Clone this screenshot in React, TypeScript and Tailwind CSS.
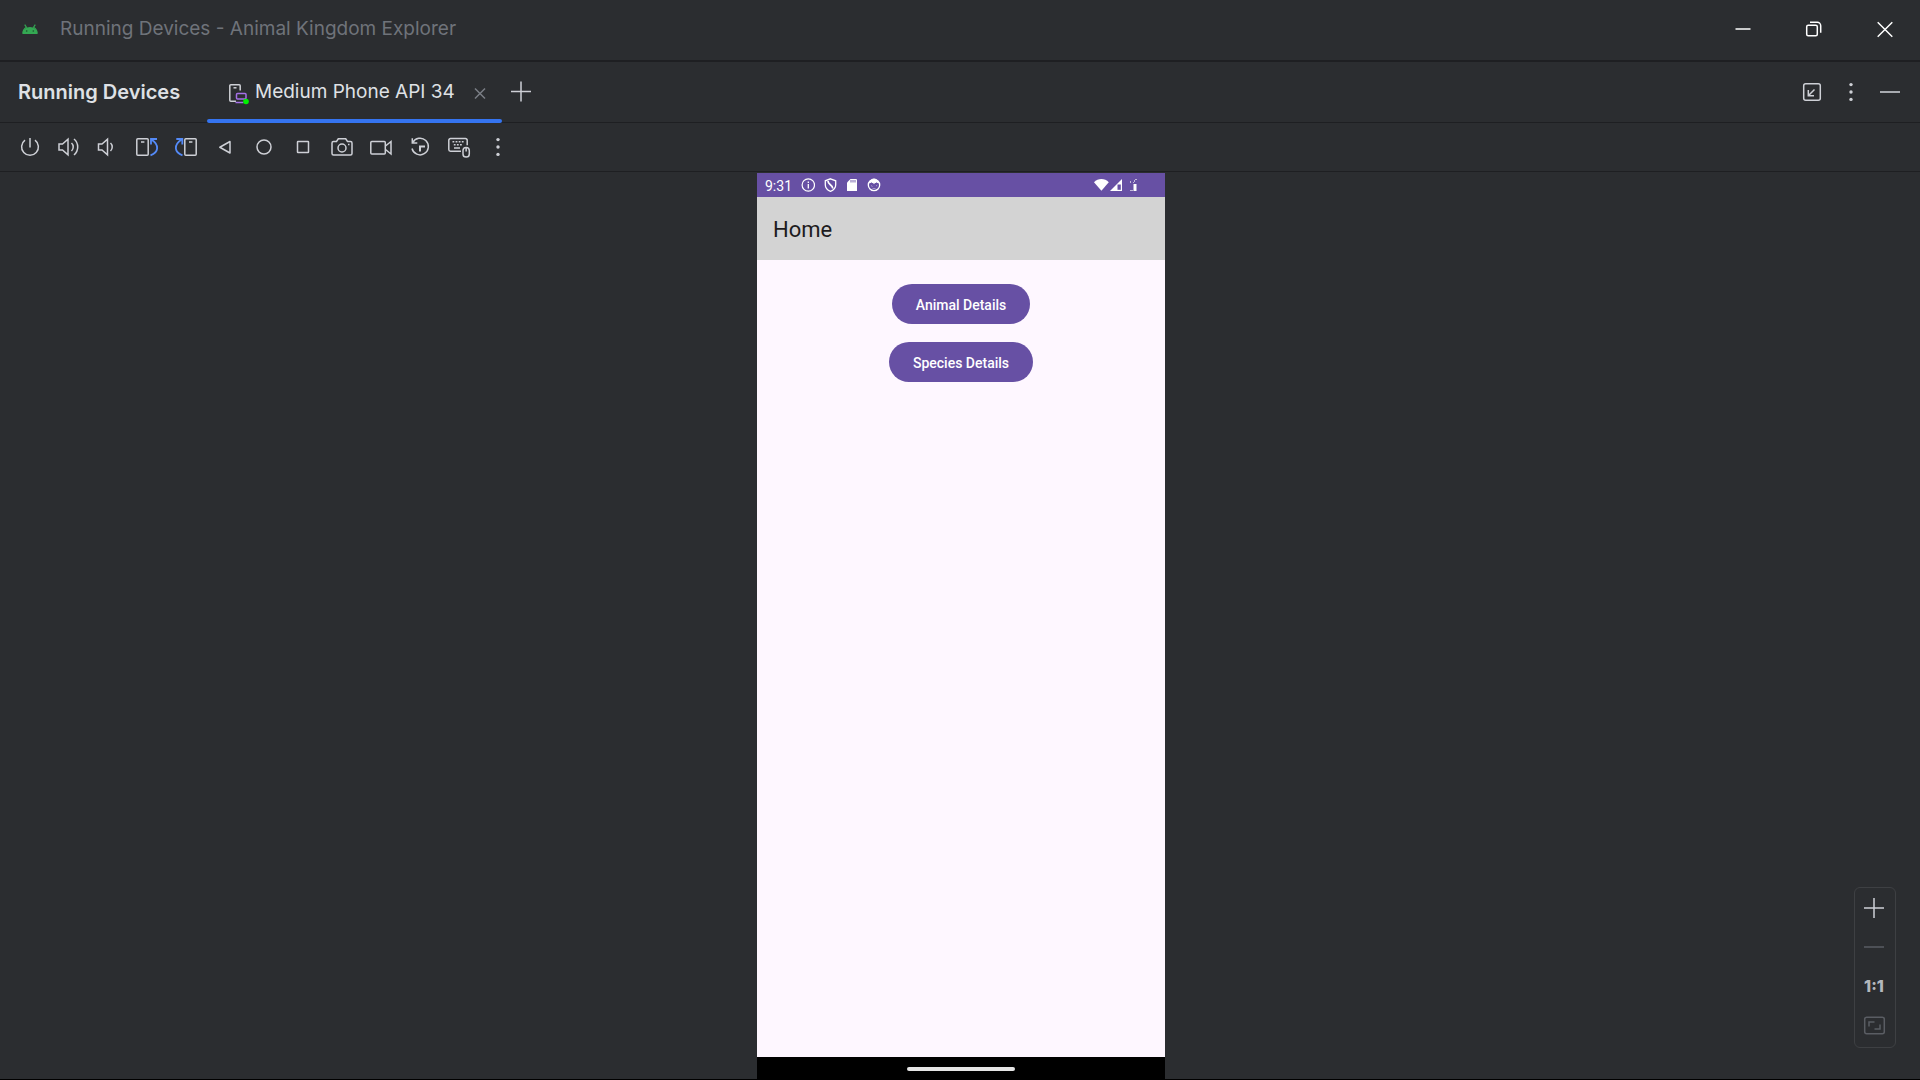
import type { ReactNode } from "react";

type IconProps = { children: ReactNode; className?: string };

function Icon({ children, className = "" }: IconProps) {
  return (
    <svg
      viewBox="0 0 24 24"
      className={`size-6 shrink-0 ${className}`}
      fill="none"
      stroke="currentColor"
      strokeWidth="1.5"
      aria-hidden="true"
    >
      {children}
    </svg>
  );
}

function Dots() {
  return (
    <g fill="currentColor" stroke="none">
      <circle cx="12" cy="4.6" r="1.7" />
      <circle cx="12" cy="12" r="1.7" />
      <circle cx="12" cy="19.4" r="1.7" />
    </g>
  );
}

const deviceActions: { label: string; icon: ReactNode }[] = [
  {
    label: "Power",
    icon: (
      <>
        <path d="M12 3v9.5" />
        <path d="M7 5.2a8.4 8.4 0 1 0 10 0" />
      </>
    ),
  },
  {
    label: "Volume up",
    icon: (
      <>
        <path d="M2 9h3.5L11 4.2v15.6L5.5 15H2z" />
        <path d="M14.5 8a5.5 5.5 0 0 1 0 8M17 4a10.5 10.5 0 0 1 0 16" />
      </>
    ),
  },
  {
    label: "Volume down",
    icon: (
      <>
        <path d="M2.500 9H6l5.500-4.800v15.600L6 15H2.500z" />
        <path d="M14.500 8a5.500 5.500 0 0 1 0 8" />
      </>
    ),
  },
  {
    label: "Rotate left",
    icon: (
      <>
        <rect x="1.8" y="3.8" width="11.4" height="16.5" rx="1" />
        <path d="M6 7h3.400" />
        <g stroke="#548af7" strokeWidth="1.800">
          <path d="M15.500 20.300C23.500 17.500 25 10 16 4.300" />
          <path d="M16 9.500V4h6" />
        </g>
      </>
    ),
  },
  {
    label: "Rotate right",
    icon: (
      <>
        <rect x="10.8" y="3.8" width="11.4" height="16.5" rx="1" />
        <path d="M15 7h3.400" />
        <g stroke="#548af7" strokeWidth="1.800">
          <path d="M8.500 20.300C.5 17.500-1 10 8 4.300" />
          <path d="M8.300 9.500V4h-6" />
        </g>
      </>
    ),
  },
  { label: "Back", icon: <path d="M17 6.5v11.5L6.8 12.250z" strokeLinejoin="round" /> },
  { label: "Home", icon: <circle cx="12" cy="12" r="7" /> },
  { label: "Overview", icon: <rect x="6.5" y="6.5" width="11" height="11" rx="0.5" /> },
  {
    label: "Take screenshot",
    icon: (
      <>
        <path d="M3.5 6.5h3l1.8-2.7h7.4l1.8 2.7h3a1.5 1.5 0 0 1 1.5 1.5v10.5a1.5 1.5 0 0 1-1.5 1.5h-17A1.5 1.5 0 0 1 2 18.5V8a1.5 1.5 0 0 1 1.5-1.5z" />
        <circle cx="12" cy="13" r="4" />
        <path d="M18 9.500h1.500" />
      </>
    ),
  },
  {
    label: "Record screen",
    icon: (
      <>
        <rect x="1.8" y="6.5" width="14.5" height="12.5" rx="1" />
        <path d="M16.500 11l5.500-4.500v12.500L16.500 14.500" />
      </>
    ),
  },
  {
    label: "Snapshots",
    icon: (
      <>
        <path d="M4.300 3.200V8h5" />
        <path d="M4.700 7.700A8.300 8.300 0 1 1 4 13.500" />
        <path d="M12 16.500v-5h5" strokeWidth="2" />
      </>
    ),
  },
  {
    label: "Hardware input",
    icon: (
      <>
        <path d="M14 16.3H3.5A1.7 1.7 0 0 1 1.8 14.6V5.3a1.7 1.7 0 0 1 1.7-1.700h15a1.700 1.700 0 0 1 1.700 1.700v5" />
        <path d="M5.5 6.7h12" strokeDasharray="1.8 1.3" />
        <path d="M6.8 9.7h9" strokeDasharray="1.8 1.3" />
        <path d="M7 13h6" />
        <rect x="16" y="12.5" width="6.3" height="9.5" rx="3.1" />
        <path d="M19.150 12.500v4" />
      </>
    ),
  },
  { label: "More device actions", icon: <Dots /> },
];

function TitleBar() {
  return (
    <header className="flex h-[62px] shrink-0 items-center justify-between border-b-2 border-[#1e1f22] pr-[23px] pb-[2px] pl-[18px]">
      <div className="flex items-center gap-[18px]">
        <svg viewBox="0 0 24 24" className="size-6" aria-hidden="true">
          <path
            d="M4.8 16.5c.2-3 1.6-5.1 3.6-6.3L6.700 7.700M19.200 16.500c-.2-3-1.600-5.100-3.600-6.300l1.700-2.500"
            stroke="#34a853"
            strokeWidth="1.2"
            fill="none"
          />
          <path d="M4.5 17a7.5 7 0 0 1 15 0z" fill="#34a853" />
          <circle cx="8.7" cy="14" r=".8" fill="#1e4f2d" />
          <circle cx="15.3" cy="14" r=".8" fill="#1e4f2d" />
        </svg>
        <h1 className="text-[19px] leading-6 text-[#6f737a]">Running Devices - Animal Kingdom Explorer</h1>
      </div>
      <div className="flex items-center gap-[47px] text-white">
        <button type="button" aria-label="Minimize">
          <Icon>
            <path d="M4.500 12h15" />
          </Icon>
        </button>
        <button type="button" aria-label="Restore">
          <Icon>
            <rect x="4.700" y="8.200" width="10.600" height="10.600" rx="1.500" />
            <path d="M8 5.200h7.200a3.500 3.500 0 0 1 3.500 3.500v7" />
          </Icon>
        </button>
        <button type="button" aria-label="Close">
          <Icon>
            <path d="M4.700 5.200l14.600 14.600M19.300 5.200L4.700 19.800" />
          </Icon>
        </button>
      </div>
    </header>
  );
}

function TabBar() {
  return (
    <div className="flex h-[61px] shrink-0 items-stretch border-b border-[#1e1f22] px-[18px] text-[#dfe1e5]">
      <h2 className="flex w-[189px] items-center text-xl font-semibold whitespace-nowrap">Running Devices</h2>
      <div className="relative -mb-px flex w-[295px] items-center pl-5">
        <button type="button" className="flex items-center gap-1 text-[19px] whitespace-nowrap">
          <Icon>
            <path d="M9 20.3H3.8a1 1 0 0 1-1-1V4.8a1 1 0 0 1 1-1h8.400a1 1 0 0 1 1 1V9.500" stroke="#ced0d6" />
            <path d="M6.5 6.8h3" stroke="#ced0d6" />
            <rect x="9.5" y="12.5" width="9.5" height="5.5" rx="1" stroke="#a571e6" />
            <path d="M8.5 21.5h8" stroke="#a571e6" />
            <circle cx="19" cy="20.5" r="2.8" fill="#00f000" stroke="none" />
          </Icon>
          Medium Phone API 34
        </button>
        <button type="button" aria-label="Close tab" className="mr-[10px] ml-auto text-[#7a7e85]">
          <Icon>
            <path d="M7 7.5l10 10M17 7.5l-10 10" />
          </Icon>
        </button>
        <span className="absolute inset-x-0 bottom-0 h-1 rounded-full bg-[#3574f0]" />
      </div>
      <button type="button" aria-label="Add device" className="ml-[7px] text-[#ced0d6]">
        <Icon>
          <path d="M2 11.5h20M12 1.5v20" />
        </Icon>
      </button>
      <div className="ml-auto flex items-center gap-[15px] text-[#ced0d6]">
        <button type="button" aria-label="Dock window">
          <Icon>
            <rect x="3.7" y="3.7" width="16.6" height="16.6" rx="2" />
            <path d="M14.5 9.5l-6 6M8.3 10v5.7h5.7" />
          </Icon>
        </button>
        <button type="button" aria-label="Options">
          <Icon>
            <Dots />
          </Icon>
        </button>
        <button type="button" aria-label="Hide" className="text-[#a8abb0]">
          <Icon>
            <path d="M2 12h20" strokeWidth="2" />
          </Icon>
        </button>
      </div>
    </div>
  );
}

function DeviceToolbar() {
  return (
    <div
      role="toolbar"
      aria-label="Device actions"
      className="flex h-[49px] shrink-0 items-center gap-[15px] border-b border-[#1e1f22] pl-[18px] text-[#ced0d6]"
    >
      {deviceActions.map(({ label, icon }) => (
        <button key={label} type="button" aria-label={label} title={label}>
          <Icon>{icon}</Icon>
        </button>
      ))}
    </div>
  );
}

function StatusBar() {
  return (
    <div className="flex h-6 shrink-0 items-center justify-between bg-[#6750a4] pr-[23px] pl-2 text-white">
      <div className="flex items-center">
        <span className="w-9 pt-px text-sm">9:31</span>
        <div className="flex gap-2">
          <svg viewBox="0 0 14 14" className="size-[14px]" fill="none" stroke="currentColor" aria-hidden="true">
            <circle cx="7.300" cy="7" r="6.2" strokeWidth="1.2" />
            <path d="M7.300 6v4.500M7.300 3.500V5" strokeWidth="1.3" />
          </svg>
          <svg viewBox="0 0 14 14" className="size-[14px]" fill="none" stroke="currentColor" aria-hidden="true">
            <path d="M7.500 .8l5.200 2v4c0 3-2 5.400-5.200 6.500C4.300 12.200 2.300 9.800 2.300 6.800v-4z" strokeWidth="1.300" />
            <path d="M5 3c0 4 4.500 3.500 4.800 7.500" strokeWidth="1.700" />
          </svg>
          <svg viewBox="0 0 14 14" className="size-[14px]" aria-hidden="true">
            <path d="M5.500 1H11a1 1 0 0 1 1 1v11H2V4.500z" fill="currentColor" />
            <path d="M6 2v2.500M8 2v2.500M10 2v2.500" stroke="#6750a4" strokeWidth=".9" />
          </svg>
          <svg viewBox="0 0 14 14" className="size-[14px]" fill="none" stroke="currentColor" aria-hidden="true">
            <circle cx="7" cy="7" r="5.7" strokeWidth="1.3" />
            <path d="M2.5 4.8C3 2.5 5 1 7 1s4 1.500 4.500 3.800L9.500 4 7 5.300 4.500 4z" fill="currentColor" />
            <path d="M4 7.500l1.500 1M9 8l1.200-.8M5.500 10.500h3" strokeWidth=".7" opacity=".6" />
          </svg>
        </div>
      </div>
      <svg viewBox="0 0 48 14" className="mr-1 h-[14px] w-12" fill="currentColor" aria-hidden="true">
        <path d="M4 4.200C8-.2 14.800-.2 18.800 4.200L11.400 12.700z" />
        <path d="M32 1v12H20z" />
        <path d="M27.500 6.500h3.300v5.300h-3.300z" fill="#6750a4" />
        <path d="M43.500 6h3v7h-3z" />
        <path d="M40 12h3v1h-3zM40 3h1v2h-1zM43 4h1v1h-1zM45 1h2v1h-2zM44 2h1v2h-1z" opacity=".6" />
      </svg>
    </div>
  );
}

function Phone() {
  return (
    <section
      aria-label="Medium Phone API 34 screen"
      className="mt-px flex w-[408px] flex-col bg-[#fef7ff] font-[Roboto,sans-serif]"
    >
      <StatusBar />
      <div className="flex h-[63px] shrink-0 items-center bg-[#d3d3d3] px-4 pt-[2px] text-[22px] text-[#1d1b20]">
        Home
      </div>
      <div className="flex flex-1 flex-col items-center gap-[18px] pt-6 text-sm font-medium text-white">
        <button type="button" className="h-10 rounded-full bg-[#6750a4] px-6 pt-px">
          Animal Details
        </button>
        <button type="button" className="h-10 rounded-full bg-[#6750a4] px-6 pt-px">
          Species Details
        </button>
      </div>
      <div className="flex h-[22px] shrink-0 items-center justify-center bg-black pt-[2px]">
        <span className="h-1 w-[108px] rounded-full bg-[#e6e6e6]" />
      </div>
    </section>
  );
}

function ZoomControls() {
  return (
    <div className="absolute right-6 bottom-[31px] flex w-[42px] flex-col items-center gap-[15px] rounded-md border border-[#3e4043] pt-2 pr-[2px] pb-[10px] text-[#ced0d6]">
      <button type="button" aria-label="Zoom in">
        <Icon>
          <path d="M2 12h20M12 2v20" />
        </Icon>
      </button>
      <button type="button" aria-label="Zoom out" className="text-[#5a5d63]">
        <Icon>
          <path d="M2 12h20" />
        </Icon>
      </button>
      <button type="button" className="h-6 text-base font-extrabold text-[#b4b7bd]">
        1:1
      </button>
      <button type="button" aria-label="Fit to window" className="text-[#5a5d63]">
        <Icon>
          <rect x="2.7" y="4.200" width="19.600" height="16.600" rx="2" />
          <path d="M7 13.500V9h5.500M18 11.500V16h-5.500" />
        </Icon>
      </button>
    </div>
  );
}

export default function App() {
  return (
    <div className="flex h-screen flex-col border-b border-black bg-[#2b2d30] font-[Inter,sans-serif]">
      <TitleBar />
      <TabBar />
      <DeviceToolbar />
      <main className="relative flex min-h-0 flex-1 justify-center pl-[2px]">
        <Phone />
        <ZoomControls />
      </main>
    </div>
  );
}
